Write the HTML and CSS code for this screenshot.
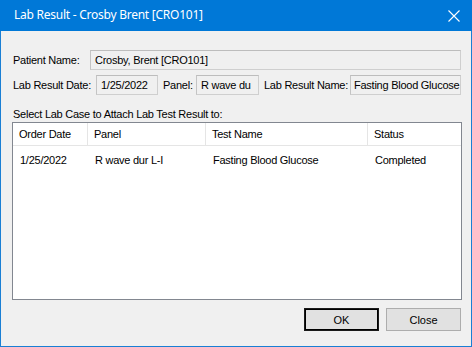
FILE: index.html
```html
<!DOCTYPE html>
<html>
<head>
<meta charset="utf-8">
<link rel="stylesheet" href="styles.css">
</head>
<body>
<div class="window">
  <div class="titlebar">
    <span class="title">Lab Result - Crosby Brent [CRO101]</span>
    <svg class="close" width="12" height="12" viewBox="0 0 12 12"><path d="M0.5 0.5 L11.5 11.5 M11.5 0.5 L0.5 11.5" stroke="#fff" stroke-width="1.1" fill="none"/></svg>
  </div>
  <div class="client">
    <div class="row row1">
      <span class="label lbl-patient">Patient Name:</span>
      <div class="tb tb-patient">Crosby, Brent [CRO101]</div>
    </div>
    <div class="row row2">
      <span class="label lbl-date">Lab Result Date:</span>
      <div class="tb tb-date">1/25/2022</div>
      <span class="label lbl-panel">Panel:</span>
      <div class="tb tb-panel">R wave du</div>
      <span class="label lbl-name">Lab Result Name:</span>
      <div class="tb tb-name">Fasting Blood Glucose</div>
    </div>
    <div class="select-label">Select Lab Case to Attach Lab Test Result to:</div>
    <div class="listview">
      <div class="lv-header">
        <div class="col c1">Order Date</div>
        <div class="col c2">Panel</div>
        <div class="col c3">Test Name</div>
        <div class="col c4">Status</div>
      </div>
      <div class="lv-row">
        <div class="col c1">1/25/2022</div>
        <div class="col c2">R wave dur L-I</div>
        <div class="col c3">Fasting Blood Glucose</div>
        <div class="col c4">Completed</div>
      </div>
    </div>
    <div class="buttons">
      <button class="btn btn-default">OK</button>
      <button class="btn">Close</button>
    </div>
  </div>
</div>
</body>
</html>
```

FILE: styles.css
```css
html, body {
  margin: 0;
  padding: 0;
  width: 472px;
  height: 347px;
  overflow: hidden;
}
.window {
  width: 472px;
  height: 347px;
  box-sizing: border-box;
  border: 1px solid #1a7fd4;
  border-top: none;
  background: #f0f0f0;
  display: flex;
  flex-direction: column;
  font-family: "Liberation Sans", Arial, sans-serif;
  font-size: 11px;
  letter-spacing: -0.25px;
  color: #000;
}
.titlebar {
  height: 31px;
  background: #0078d7;
  margin: 0 -1px;
  display: flex;
  align-items: center;
  justify-content: space-between;
  padding: 0 12px 0 14px;
}
.title {
  color: #fff;
  font-family: "Noto Sans", "Open Sans", sans-serif;
  font-size: 12px;
  letter-spacing: -0.25px;
  position: relative;
  top: -1px;
}
.close {
  display: block;
}
.client {
  flex: 1;
  display: flex;
  flex-direction: column;
  padding: 19px 10px 0 12px;
}
.row {
  display: flex;
  align-items: center;
}
.row1 { height: 20px; }
.row2 { height: 20px; margin-top: 5px; }
.label {
  white-space: nowrap;
}
.lbl-patient { width: 77px; }
.lbl-date { width: 83px; }
.lbl-panel { width: 33px; margin-left: 5px; }
.lbl-name { width: 86px; margin-left: 5px; }
.tb {
  box-sizing: border-box;
  height: 20px;
  border: 1px solid #cfcfcf;
  border-top-color: #bdbdbd;
  border-left-color: #c4c4c4;
  background: #f0f0f0;
  padding: 0 0 0 4px;
  line-height: 18px;
  white-space: nowrap;
  overflow: hidden;
}
.tb-patient { width: 371px; }
.tb-date { width: 62px; }
.tb-panel { width: 63px; }
.tb-name { width: 111px; padding-left: 3px; }
.select-label {
  margin-top: 13px;
  height: 14px;
  line-height: 13px;
}
.listview {
  margin-left: -1px;
  box-sizing: border-box;
  width: 450px;
  height: 178px;
  border: 1px solid #828790;
  background: #fff;
}
.lv-header {
  display: flex;
  height: 23px;
  border-bottom: 1px solid #e5e5e5;
  box-sizing: border-box;
}
.lv-header .col {
  border-right: 1px solid #e5e5e5;
  line-height: 22px;
  box-sizing: border-box;
  padding-left: 6px;
}
.lv-header .c4 { border-right: none; }
.lv-row {
  display: flex;
  height: 22px;
  margin-top: 2px;
}
.lv-row .col {
  line-height: 24px;
  box-sizing: border-box;
  padding-left: 7px;
}
.c1 { width: 75px; }
.c2 { width: 118px; }
.c3 { width: 162px; }
.c4 { flex: 1; }
.buttons {
  display: flex;
  justify-content: flex-end;
  gap: 7px;
  margin-top: 8px;
  padding-right: 0;
}
.btn {
  width: 75px;
  height: 23px;
  box-sizing: border-box;
  border: 1px solid #adadad;
  background: #e1e1e1;
  font-family: "Liberation Sans", Arial, sans-serif;
  font-size: 11px;
  color: #000;
  padding: 0;
}
.btn-default {
  border-width: 1px;
  border-color: #1a1a1a;
  outline: 1px solid #000;
  outline-offset: -2px;
}
```
